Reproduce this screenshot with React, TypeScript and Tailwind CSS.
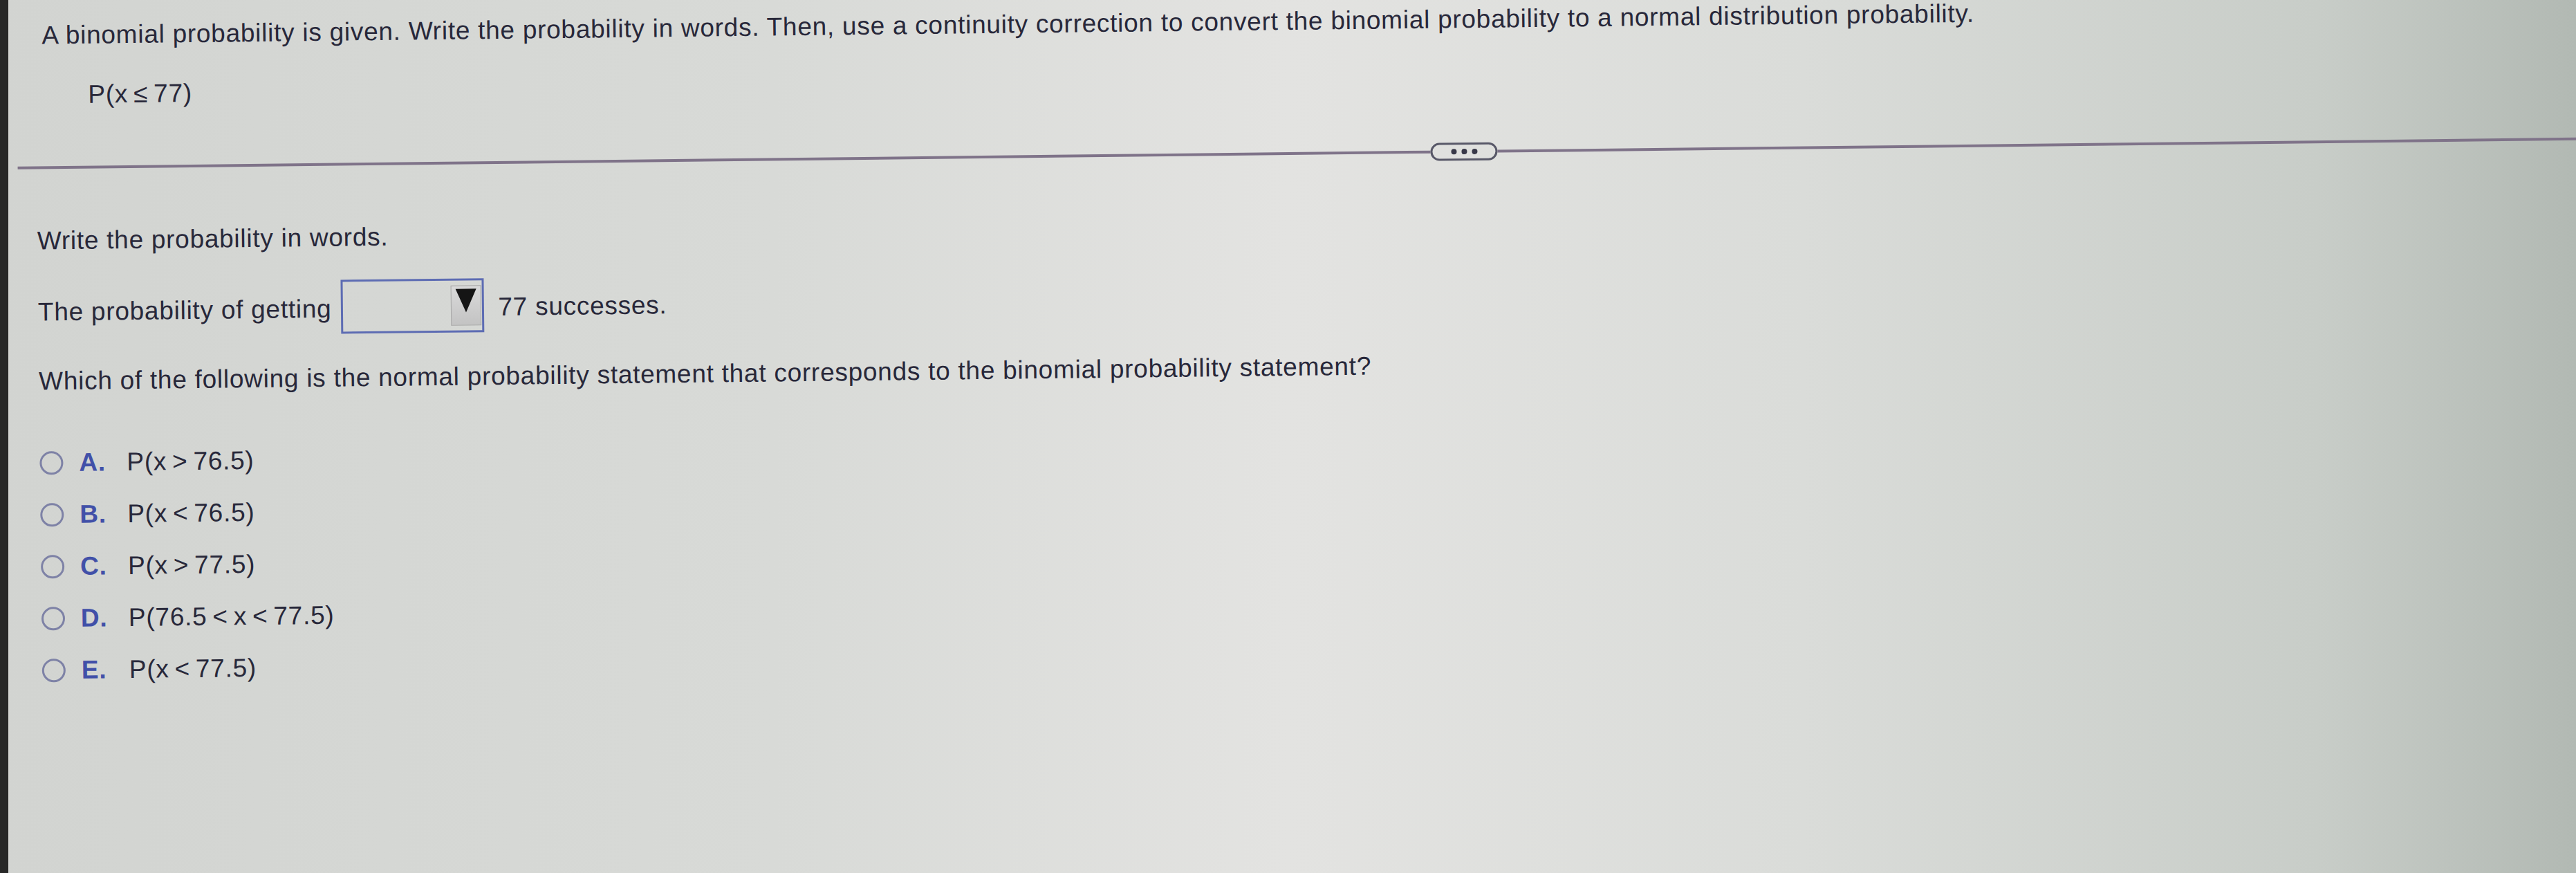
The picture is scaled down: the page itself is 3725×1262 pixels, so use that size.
import React from "react";

const Rel = ({ c }: { c: string }) => <span className="mx-[8px]">{c}</span>;

const options: { l: string; e: React.ReactNode }[] = [
  { l: "A.", e: <>P(x<Rel c=">" />76.5)</> },
  { l: "B.", e: <>P(x<Rel c="<" />76.5)</> },
  { l: "C.", e: <>P(x<Rel c=">" />77.5)</> },
  { l: "D.", e: <>P(76.5<Rel c="<" />x<Rel c="<" />77.5)</> },
  { l: "E.", e: <>P(x<Rel c="<" />77.5)</> },
];

export default function App() {
  return (
    <div className="w-full h-[1262px] overflow-hidden flex bg-[linear-gradient(90deg,#d2d4d1_0%,#d8dad7_30%,#e3e3e1_50%,#dadcd9_70%,#c8cdc8_90%,#b2b9b3_100%)] font-['Liberation_Sans',Arial,sans-serif] text-[37px] leading-[44px] tracking-[0.02em] text-[#28283a]">
      <div className="w-[12px] shrink-0 bg-[#272727]" />
      <div className="w-[3800px] shrink-0 origin-left -rotate-[0.65deg]">
        {/* header */}
        <div className="pt-[30px] pl-[55px] whitespace-nowrap">
          A binomial probability is given. Write the probability in words. Then, use a continuity correction to convert the binomial probability to a normal distribution probability.
        </div>
        <div className="mt-[42px] pl-[121px] whitespace-nowrap">
          P(x<Rel c="≤" />77)
        </div>
        {/* divider */}
        <div className="mt-[70px] ml-[18px] flex items-center h-[26px]">
          <div className="w-[2043px] h-[4px] bg-[#7f7389]" />
          <div className="w-[97px] h-[26px] rounded-full border-[3px] border-[#585868] flex items-center justify-center gap-[7px]">
            <span className="w-[8px] h-[8px] rounded-full bg-[#383848]" />
            <span className="w-[8px] h-[8px] rounded-full bg-[#383848]" />
            <span className="w-[8px] h-[8px] rounded-full bg-[#383848]" />
          </div>
          <div className="flex-1 h-[4px] bg-[#7f7389]" />
        </div>
        {/* body */}
        <div className="pl-[45px]">
          <div className="mt-[71px] whitespace-nowrap">Write the probability in words.</div>
          <div className="mt-[39px] flex items-start whitespace-nowrap">
            <span className="mt-[20px]">The probability of getting</span>
            <div className="ml-[14px] w-[207px] h-[78px] border-[3px] border-[#5d6cb3] flex items-center justify-end pr-[1px]">
              <div className="w-[44px] h-[58px] border border-[#a6a6a6] bg-[linear-gradient(180deg,#dadada,#c3c3c3)] flex justify-center">
                <svg width="34" height="40" viewBox="0 0 34 40" className="mt-[1px]">
                  <polygon points="2,3 32,3 17,37" fill="#151515" />
                </svg>
              </div>
            </div>
            <span className="mt-[20px] ml-[20px]">77 successes.</span>
          </div>
          <div className="mt-[42px] whitespace-nowrap">
            Which of the following is the normal probability statement that corresponds to the binomial probability statement?
          </div>
          <div className="mt-[74px] flex flex-col gap-[31px]">
            {options.map((o) => (
              <div key={o.l} className="flex items-center h-[44px] whitespace-nowrap">
                <span className="w-[34px] h-[34px] rounded-full border-[3px] border-[#7e82a6] shrink-0" />
                <span className="ml-[23px] w-[69px] font-bold text-[#4150a8]">{o.l}</span>
                <span>{o.e}</span>
              </div>
            ))}
          </div>
        </div>
      </div>
    </div>
  );
}
